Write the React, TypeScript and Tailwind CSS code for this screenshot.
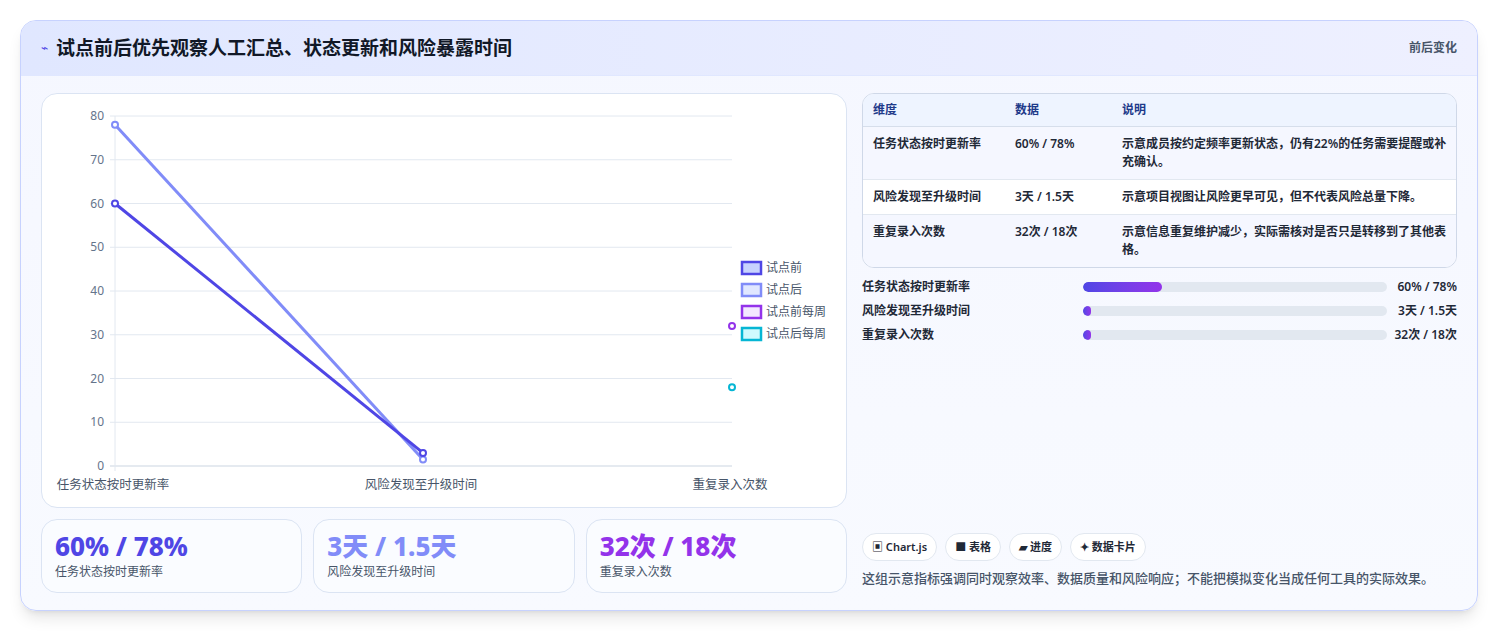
const font = { fontFamily: '"Noto Sans", "Noto Sans CJK SC", sans-serif' };

const rows = [
  ["任务状态按时更新率", "60% / 78%", "示意成员按约定频率更新状态，仍有22%的任务需要提醒或补充确认。"],
  ["风险发现至升级时间", "3天 / 1.5天", "示意项目视图让风险更早可见，但不代表风险总量下降。"],
  ["重复录入次数", "32次 / 18次", "示意信息重复维护减少，实际需核对是否只是转移到了其他表格。"],
];

const bars = [
  ["任务状态按时更新率", "60% / 78%", 26],
  ["风险发现至升级时间", "3天 / 1.5天", 2.5],
  ["重复录入次数", "32次 / 18次", 2.5],
] as const;

function Chart() {
  const y = (v: number) => 465 - v * 4.375;
  const xs = [113, 421, 730];
  const ox = 40, oy = 93;
  return (
    <svg width="806" height="415" viewBox={`${ox} ${oy} 806 415`} className="block">
      {[0, 10, 20, 30, 40, 50, 60, 70, 80].map((v) => (
        <g key={v}>
          <line x1={108} x2={730} y1={y(v)} y2={y(v)} stroke={v === 0 ? "#cbd5e1" : "#e2e8f0"} />
          <text x={102} y={y(v) + 4} textAnchor="end" fontSize="12" fill="#64748b" style={font}>{v}</text>
        </g>
      ))}
      <line x1={113} x2={113} y1={115} y2={470} stroke="#e2e8f0" />
      {["任务状态按时更新率", "风险发现至升级时间", "重复录入次数"].map((t, i) => (
        <text key={t} x={xs[i] - 2} y={488} textAnchor="middle" fontSize="12.5" fill="#475569" style={font}>{t}</text>
      ))}
      <polyline points={`113,${y(78)} 421,${y(1.5)}`} stroke="#818cf8" strokeWidth="3" fill="none" />
      <polyline points={`113,${y(60)} 421,${y(3)}`} stroke="#4f46e5" strokeWidth="3" fill="none" />
      <circle cx={113} cy={y(78)} r="3" fill="#fff" stroke="#818cf8" strokeWidth="2" />
      <circle cx={421} cy={y(1.5)} r="3" fill="#fff" stroke="#818cf8" strokeWidth="2" />
      <circle cx={113} cy={y(60)} r="3" fill="#fff" stroke="#4f46e5" strokeWidth="2" />
      <circle cx={421} cy={y(3)} r="3" fill="#fff" stroke="#4f46e5" strokeWidth="2" />
      <circle cx={730} cy={y(32)} r="3" fill="#fff" stroke="#9333ea" strokeWidth="2" />
      <circle cx={730} cy={y(18)} r="3" fill="#fff" stroke="#06b6d4" strokeWidth="2" />
      {[
        ["试点前", "#4f46e5", "#c7d2fe"],
        ["试点后", "#818cf8", "#e0e7ff"],
        ["试点前每周", "#9333ea", "#f3e8ff"],
        ["试点后每周", "#06b6d4", "#cffafe"],
      ].map(([t, c, f], i) => (
        <g key={t}>
          <rect x={740} y={261 + i * 22} width={19} height={12} fill={f} stroke={c} strokeWidth="2.5" />
          <text x={764} y={271 + i * 22} fontSize="12" fill="#475569" style={font}>{t}</text>
        </g>
      ))}
    </svg>
  );
}

export default function App() {
  return (
    <div className="w-[1498px] h-[632px] bg-white pt-5 px-5" style={font}>
      <div className="w-[1458px] h-[591px] rounded-2xl border border-[#c7d2fe] bg-gradient-to-b from-[#f5f7ff] to-[#f8faff] shadow-lg overflow-hidden">
        <div className="h-[55px] flex items-center justify-between px-5 bg-gradient-to-r from-[#e0e7ff] to-[#eef0ff] border-b border-[#e0e7ff]">
          <div className="flex items-center gap-2">
            <span className="text-[#4f46e5] text-xs">⌁</span>
            <h1 className="text-[19px] font-bold text-[#111827]">试点前后优先观察人工汇总、状态更新和风险暴露时间</h1>
          </div>
          <span className="text-xs font-semibold text-[#475569]">前后变化</span>
        </div>
        <div className="flex gap-[15px] px-5 pt-[17px]">
          <div className="w-[806px] flex flex-col gap-[11px]">
            <div className="h-[415px] rounded-2xl border border-[#dbe4f3] bg-white overflow-hidden">
              <Chart />
            </div>
            <div className="grid grid-cols-3 gap-[11px]">
              {[
                ["60% / 78%", "text-[#4f46e5]", "任务状态按时更新率"],
                ["3天 / 1.5天", "text-[#818cf8]", "风险发现至升级时间"],
                ["32次 / 18次", "text-[#9333ea]", "重复录入次数"],
              ].map(([v, c, l]) => (
                <div key={l} className="h-[74px] rounded-2xl border border-[#dbe4f3] bg-[#fafcff] px-[13px] pt-[11px]">
                  <div className={`text-[26px] leading-[30px] font-extrabold ${c}`}>{v}</div>
                  <div className="text-xs text-[#475569] mt-[3px]">{l}</div>
                </div>
              ))}
            </div>
          </div>
          <div className="flex-1 flex flex-col">
            <div className="rounded-xl border border-[#cfd8e8] bg-white overflow-hidden text-xs">
              <div className="flex h-[33px] items-center bg-[#eef4ff] border-b border-[#d6deeb] font-semibold text-[#1e3a8a]">
                <div className="w-[152px] pl-[10px]">维度</div>
                <div className="w-[107px]">数据</div>
                <div className="flex-1">说明</div>
              </div>
              {rows.map(([a, b, c], i) => (
                <div key={a} className={`flex py-[8px] leading-[18px] font-semibold text-[#1f2937] ${i % 2 ? "bg-white" : "bg-[#f5f7ff]"} ${i < 2 ? "border-b border-[#e2e8f0]" : ""}`}>
                  <div className="w-[152px] pl-[10px] shrink-0">{a}</div>
                  <div className="w-[107px] shrink-0">{b}</div>
                  <div className="flex-1 pr-2">{c}</div>
                </div>
              ))}
            </div>
            <div className="flex flex-col gap-[7px] mt-[10px]">
              {bars.map(([l, v, w]) => (
                <div key={l} className="flex items-center h-[17px] text-xs font-semibold text-[#1f2937]">
                  <div className="w-[221px]">{l}</div>
                  <div className="w-[304px] h-[10px] rounded-full bg-[#e2e8f0] overflow-hidden">
                    <div className="h-full rounded-full bg-gradient-to-r from-[#4f46e5] to-[#9333ea]" style={{ width: `${w}%` }} />
                  </div>
                  <div className="flex-1 text-right">{v}</div>
                </div>
              ))}
            </div>
            <div className="flex gap-2 mt-[190px]">
              {["▣ Chart.js", "■ 表格", "▰ 进度", "✦ 数据卡片"].map((t) => (
                <span key={t} className="h-[28px] px-[9px] flex items-center rounded-full border border-[#e2e8f0] bg-white text-[11px] font-semibold text-[#1f2937]">{t}</span>
              ))}
            </div>
            <p className="mt-[8px] text-[13px] font-medium text-[#475569]">这组示意指标强调同时观察效率、数据质量和风险响应；不能把模拟变化当成任何工具的实际效果。</p>
          </div>
        </div>
      </div>
    </div>
  );
}
